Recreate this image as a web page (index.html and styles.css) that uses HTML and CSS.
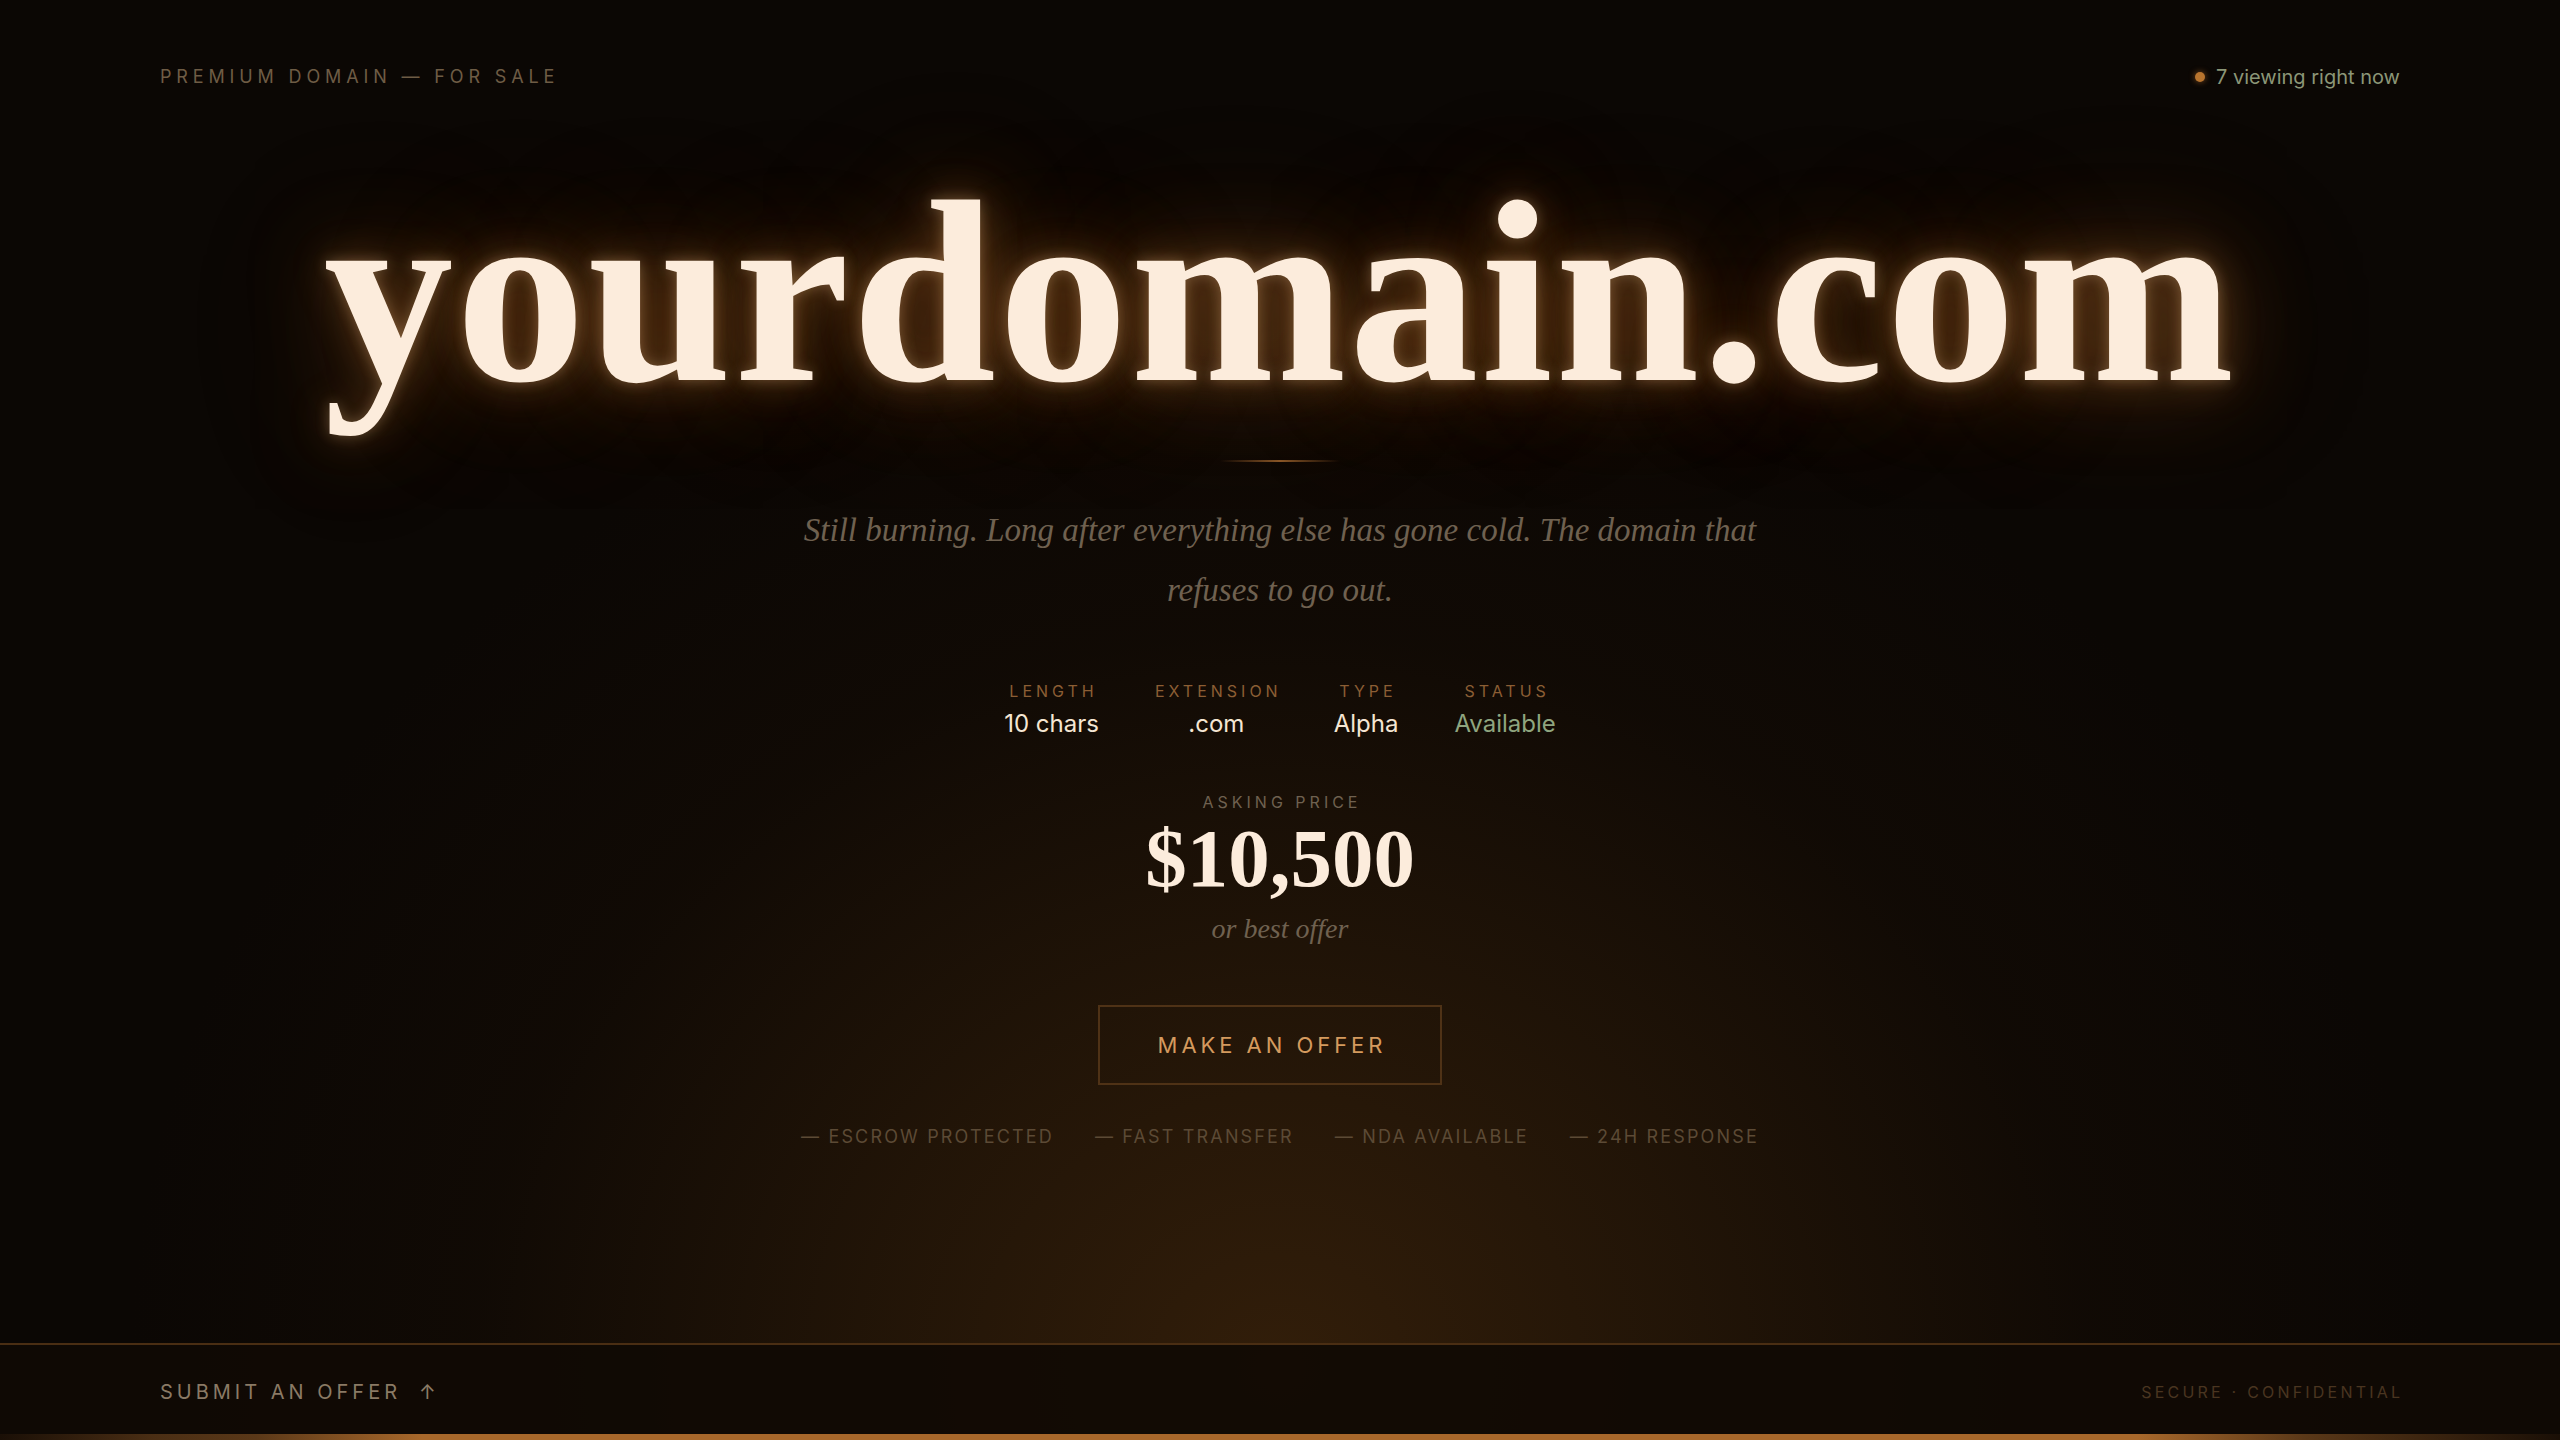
FILE: index.html
```html
<!DOCTYPE html>
<html lang="en">
<head>
<meta charset="utf-8">
<title>yourdomain.com — Premium Domain For Sale</title>
<link rel="stylesheet" href="styles.css">
</head>
<body>
<div class="page">
  <header class="topbar">
    <div class="eyebrow">Premium Domain — For Sale</div>
    <div class="live"><span class="live-dot"></span>7 viewing right now</div>
  </header>

  <main class="hero">
    <h1 class="domain">yourdomain.com</h1>
    <div class="divider"></div>
    <p class="tagline">Still burning. Long after everything else has gone cold. The domain that refuses to go out.</p>

    <div class="stats">
      <div class="stat"><div class="stat-label">Length</div><div class="stat-value">10 chars</div></div>
      <div class="stat"><div class="stat-label">Extension</div><div class="stat-value">.com</div></div>
      <div class="stat"><div class="stat-label">Type</div><div class="stat-value">Alpha</div></div>
      <div class="stat"><div class="stat-label">Status</div><div class="stat-value ok">Available</div></div>
    </div>

    <div class="price-label">Asking Price</div>
    <div class="price">$10,500</div>
    <div class="price-note">or best offer</div>

    <button class="offer-btn">Make an Offer</button>

    <ul class="features">
      <li>— Escrow Protected</li>
      <li>— Fast Transfer</li>
      <li>— NDA Available</li>
      <li>— 24H Response</li>
    </ul>
  </main>

  <footer class="footer">
    <div class="footer-row">
      <div class="submit">Submit an Offer <span class="arrow">↑</span></div>
      <div class="secure">Secure · Confidential</div>
    </div>
    <div class="progress"></div>
  </footer>
</div>
</body>
</html>
```

FILE: styles.css
```css
* { box-sizing: border-box; }

html, body {
  margin: 0;
  padding: 0;
  background: #0b0704;
}

body {
  font-family: "Inter", "Liberation Sans", sans-serif;
  color: #f5e6d3;
}

.page {
  width: 2560px;
  height: 1440px;
  display: flex;
  flex-direction: column;
  overflow: hidden;
  background:
    radial-gradient(ellipse 1150px 1050px at 50% 95%, rgba(52, 31, 10, 0.95) 0%, rgba(38, 23, 8, 0.85) 35%, rgba(20, 12, 5, 0.6) 70%, rgba(11, 7, 4, 0) 100%),
    #0b0704;
}

/* header */
.topbar {
  display: flex;
  justify-content: space-between;
  align-items: center;
  padding: 60px 160px 0;
  height: 94px;
}

.eyebrow {
  font-size: 18px;
  letter-spacing: 0.27em;
  text-transform: uppercase;
  color: #6e5c45;
  line-height: 34px;
}

.live {
  display: flex;
  align-items: center;
  gap: 11px;
  font-size: 20px;
  color: #8b9677;
  line-height: 34px;
}

.live-dot {
  width: 10px;
  height: 10px;
  border-radius: 50%;
  background: #b8742e;
  box-shadow: 0 0 6px rgba(200, 120, 50, 0.6);
}

/* hero */
.hero {
  flex: 1;
  display: flex;
  flex-direction: column;
  align-items: center;
}

.domain {
  margin: 68px 0 0;
  font-family: "Liberation Serif", "Times New Roman", serif;
  font-weight: 700;
  font-size: 260px;
  line-height: 260px;
  letter-spacing: 2px;
  color: #fcecdc;
  text-shadow:
    0 0 14px rgba(255, 205, 150, 0.3),
    0 0 40px rgba(220, 140, 60, 0.3),
    0 0 90px rgba(190, 105, 40, 0.35),
    0 0 160px rgba(150, 80, 30, 0.3);
}

.divider {
  margin-top: 38px;
  width: 120px;
  height: 2px;
  background: linear-gradient(90deg, rgba(168, 104, 43, 0) 0%, #8a5626 50%, rgba(168, 104, 43, 0) 100%);
}

.tagline {
  margin: 38px 0 0;
  max-width: 1000px;
  text-align: center;
  font-family: "Liberation Serif", "Times New Roman", serif;
  font-style: italic;
  font-size: 33px;
  line-height: 60px;
  color: #6f6150;
}

.stats {
  margin-top: 61px;
  display: flex;
  gap: 56px;
}

.stat {
  display: flex;
  flex-direction: column;
  align-items: center;
}

.stat-label {
  font-size: 16px;
  line-height: 20px;
  letter-spacing: 0.25em;
  margin-right: -0.25em;
  text-transform: uppercase;
  color: #8b5e34;
}

.stat-value {
  margin-top: 8px;
  font-size: 24px;
  line-height: 30px;
  color: #f5e6d3;
}

.stat-value.ok { color: #8fa57f; }

.price-label {
  margin-top: 53px;
  font-size: 16px;
  line-height: 20px;
  letter-spacing: 0.25em;
  margin-right: -0.25em;
  text-transform: uppercase;
  color: #6f6150;
}

.price {
  margin-top: 5px;
  font-family: "Liberation Serif", "Times New Roman", serif;
  font-weight: 700;
  font-size: 83px;
  line-height: 82px;
  color: #fcecdc;
}

.price-note {
  margin-top: 12px;
  font-family: "Liberation Serif", "Times New Roman", serif;
  font-style: italic;
  font-size: 28px;
  line-height: 36px;
  color: #6f6150;
}

.offer-btn {
  margin-top: 58px;
  margin-right: 20px;
  width: 344px;
  height: 80px;
  background: transparent;
  border: 2px solid #4f3216;
  font-family: "Inter", "Liberation Sans", sans-serif;
  font-size: 22px;
  letter-spacing: 0.18em;
  text-indent: 0.18em;
  text-transform: uppercase;
  color: #d49a5e;
  cursor: pointer;
}

.features {
  list-style: none;
  margin: 41px 0 0;
  padding: 0;
  display: flex;
  gap: 41px;
}

.features li {
  font-size: 18px;
  line-height: 22px;
  letter-spacing: 0.12em;
  text-transform: uppercase;
  color: #5c4a35;
}

/* footer */
.footer {
  border-top: 2px solid #4a2e13;
  background: rgba(16, 10, 4, 0.92);
}

.footer-row {
  height: 89px;
  padding: 5px 160px 0;
  display: flex;
  justify-content: space-between;
  align-items: center;
}

.submit {
  font-size: 20px;
  letter-spacing: 0.2em;
  text-transform: uppercase;
  color: #8a7a65;
  display: flex;
  align-items: center;
}

.arrow {
  margin-left: 18px;
  letter-spacing: 0;
}

.secure {
  font-size: 16px;
  letter-spacing: 0.2em;
  margin-right: -0.2em;
  text-transform: uppercase;
  color: #4a3520;
}

.progress {
  height: 6px;
  background: linear-gradient(90deg, #1a0f06 0%, #4a2e14 6%, #5a3818 10%, #a8682b 16.5%, #a8682b 83.5%, #5a3818 90%, #1a0f06 100%);
}
```
